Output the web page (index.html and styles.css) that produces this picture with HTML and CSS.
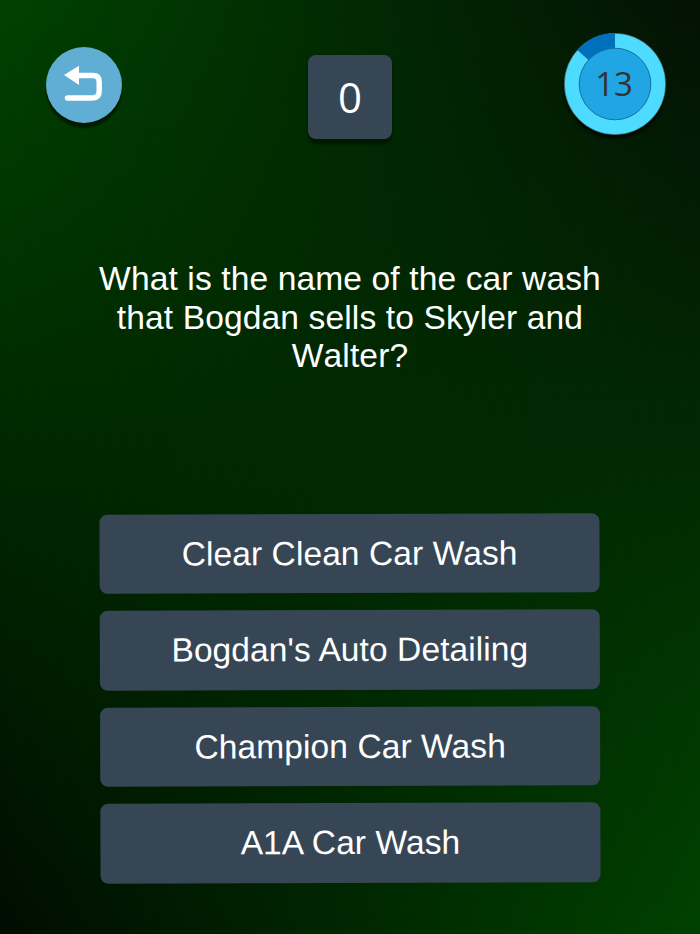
FILE: index.html
```
<!DOCTYPE html>
<html lang="en">
<head>
  <meta charset="UTF-8">
  <meta name="viewport" content="width=device-width, initial-scale=1.0">
  <title>Quiz</title>
  <link rel="stylesheet" href="styles.css">
</head>
<body>

  <div class="game">
    <div class="top-bar">
      <button class="back-btn" aria-label="Back">
        <svg viewBox="0 0 76 76">
          <path class="arrow-line" d="M30 28.5 H47 Q53.2 28.5 53.2 35 V44 Q53.2 51 46.5 51 H21.5"/>
          <path class="arrow-head" d="M18 28 L33 18.7 V38 Z"/>
        </svg>
      </button>

      <div class="score">0</div>

      <div class="timer">
        <svg viewBox="0 0 102 102">
          <circle class="timer-track" cx="51" cy="51" r="50.7"/>
          <path class="timer-used" d="M51 51 L13.3 17 A50.7 50.7 0 0 1 51 0.3 Z"/>
          <circle class="timer-center" cx="51" cy="51" r="35.8"/>
          <text class="timer-text" x="50" y="62.5">13</text>
        </svg>
      </div>
    </div>

    <div class="question">What is the name of the car wash that Bogdan sells to Skyler and Walter?</div>

    <div class="answers">
      <button class="answer">Clear Clean Car Wash</button>
      <button class="answer">Bogdan's Auto Detailing</button>
      <button class="answer">Champion Car Wash</button>
      <button class="answer">A1A Car Wash</button>
    </div>
  </div>

</body>
</html>
```
FILE: styles.css
```
* {
  box-sizing: border-box;
}

body {
  margin: 0;
  font-family: "Liberation Sans", Arial, sans-serif;
  color: white;
}

.game {
  position: relative;
  z-index: 0;
  height: 100vh;
  display: flex;
  flex-direction: column;
  align-items: center;
  overflow: hidden;
  background: linear-gradient(to bottom, #004200, #000d02);
}

/* right side of the background, fades in over the left one */
.game::before {
  content: "";
  position: absolute;
  inset: 0;
  z-index: -1;
  background: linear-gradient(to bottom, #031204, #004200);
  -webkit-mask-image: linear-gradient(to right, transparent, black);
  mask-image: linear-gradient(to right, transparent, black);
}

button {
  border: none;
  padding: 0;
  font-family: inherit;
  color: inherit;
  cursor: pointer;
}

.top-bar {
  width: 100%;
  height: 260px;
  padding: 33px 34px 0 46.4px;
  display: flex;
  justify-content: space-between;
  align-items: flex-start;
}

.back-btn {
  width: 76px;
  height: 76px;
  margin-top: 13.6px;
  margin-right: 26px;
  border-radius: 50%;
  background: #60aed4;
  box-shadow: 0 5px 2px rgba(0, 0, 0, 0.5);
}

.back-btn svg {
  display: block;
}

.arrow-line {
  fill: none;
  stroke: white;
  stroke-width: 5.4;
  stroke-linecap: round;
}

.arrow-head {
  fill: white;
}

.score {
  width: 84px;
  height: 84px;
  margin-top: 22px;
  margin-right: 12.5px;
  border-radius: 8px;
  background: #374655;
  box-shadow: 0 5px 3px rgba(0, 0, 0, 0.4);
  font-family: "Open Sans", sans-serif;
  font-size: 42px;
  line-height: 83px;
  text-align: center;
}

.timer {
  width: 102px;
  height: 102px;
  border-radius: 50%;
  box-shadow: 0 4px 3px rgba(0, 0, 0, 0.6);
}

.timer svg {
  display: block;
}

.timer-track {
  fill: #4ddbff;
  stroke: #4b5351;
  stroke-width: 0.6;
}

.timer-used {
  fill: #006fbc;
}

.timer-center {
  fill: #20a6e2;
  stroke: #15719d;
  stroke-width: 1;
}

.timer-text {
  fill: #333;
  font-family: "Open Sans", sans-serif;
  font-size: 33px;
  text-anchor: middle;
}

.question {
  width: 506px;
  height: 254px;
  font-size: 33.6px;
  font-kerning: none;
  letter-spacing: 0.11px;
  line-height: 38.7px;
  text-align: center;
}

.answers {
  width: 500px;
  display: flex;
  flex-direction: column;
  gap: 17.2px;
  transform: rotate(-0.18deg);
}

.answer {
  height: 79.3px;
  border-radius: 8px;
  background: #374655;
  font-size: 33.6px;
  letter-spacing: 0.06px;
}
```
